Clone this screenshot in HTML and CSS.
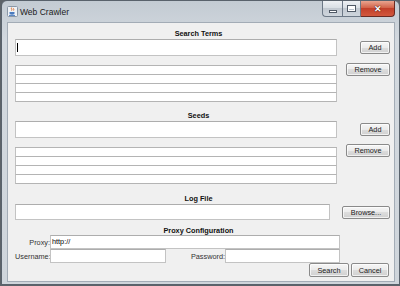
FILE: index.html
```html
<!DOCTYPE html>
<html lang="en">
  <head>
    <meta charset="UTF-8" />
    <title>Web Crawler</title>
    <link rel="stylesheet" href="styles.css">
  </head>
  <body>
    <div class="window">
      <div class="titlebar">
        <svg class="app-icon" width="11" height="11" viewBox="0 0 11 11">
          <rect x="0.5" y="0.5" width="10" height="10" rx="1" fill="#eef2f6" stroke="#8a97a6" />
          <path d="M4.6 1.6c-1 1 1 1.6 0 3M6.6 2.2c-.7.8.7 1 0 2.3" stroke="#e3702a" fill="none" />
          <path d="M2.5 6h5v1.3c0 1-1 1.4-2.5 1.4S2.5 8.3 2.5 7.3z" fill="#4a7bbf" />
          <path d="M2 9.4h6" stroke="#4a7bbf" />
        </svg>
        <span class="title">Web Crawler</span>
        <div class="caption">
          <span class="cap cap-min"><i></i></span>
          <span class="cap cap-max"><i></i></span>
          <span class="cap cap-close">&#x2715;</span>
        </div>
      </div>

      <div class="client">
        <div class="heading">Search Terms</div>
        <div class="row">
          <div class="field field-entry"><span class="caret"></span></div>
          <button class="btn btn-add">Add</button>
        </div>
        <div class="row row-list">
          <div class="list">
            <div class="list-item"></div>
            <div class="list-item"></div>
            <div class="list-item"></div>
            <div class="list-item"></div>
          </div>
          <button class="btn btn-remove">Remove</button>
        </div>

        <div class="heading heading-seeds">Seeds</div>
        <div class="row">
          <div class="field field-entry"></div>
          <button class="btn btn-add">Add</button>
        </div>
        <div class="row row-list row-list-seeds">
          <div class="list">
            <div class="list-item"></div>
            <div class="list-item"></div>
            <div class="list-item"></div>
            <div class="list-item"></div>
          </div>
          <button class="btn btn-remove">Remove</button>
        </div>

        <div class="heading heading-log">Log File</div>
        <div class="row">
          <div class="field field-log"></div>
          <button class="btn btn-browse">Browse...</button>
        </div>

        <div class="heading heading-proxy">Proxy Configuration</div>
        <div class="proxy">
          <label class="proxy-label">Proxy:</label>
          <div class="field field-small field-proxy"><span class="field-text">http://</span></div>
          <label class="proxy-label">Username:</label>
          <div class="field field-small"></div>
          <label class="proxy-label">Password:</label>
          <div class="field field-small"></div>
        </div>

        <div class="actions">
          <button class="btn btn-search">Search</button>
          <button class="btn btn-cancel">Cancel</button>
        </div>
      </div>
    </div>
  </body>
</html>
```

FILE: styles.css
```css
* {
  box-sizing: border-box;
}
body {
  margin: 0;
  height: 286px;
  overflow: hidden;
  background: #5d6369;
  font-family: 'Liberation Sans', Arial, sans-serif;
}
.window {
  margin-left: 1px;
  width: 399px;
  height: 285px;
  padding: 0 4px 2px 5px;
  border: 1px solid #59626c;
  border-radius: 6px 6px 0 0;
  background: linear-gradient(#c3cbd3, #d3d9df 40px, #cfd5db);
}
.titlebar {
  height: 21px;
  display: flex;
  align-items: center;
}
.app-icon {
  flex: none;
}
.title {
  margin-left: 2px;
  font-size: 8.5px;
  color: #1b1b1b;
}
.caption {
  margin-left: auto;
  align-self: flex-start;
  display: flex;
  height: 16px;
}
.cap {
  display: flex;
  align-items: center;
  justify-content: center;
  height: 16px;
  border: 1px solid #6c7886;
  border-top: 0;
  background: linear-gradient(#eef1f4, #d7dde3 50%, #c2c9d1 50%, #cfd6dd);
}
.cap-min {
  width: 20px;
  border-radius: 0 0 0 4px;
  border-right: 0;
}
.cap-min i {
  width: 8px;
  height: 3px;
  margin-top: 5px;
  background: #fff;
  border: 1px solid #505a66;
}
.cap-max {
  width: 19px;
}
.cap-max i {
  width: 9px;
  height: 7px;
  border: 1px solid #505a66;
  box-shadow: inset 0 0 0 1px #fff, inset 0 2px 0 1px #fff;
  background: #b9c2cc;
}
.cap-close {
  width: 34px;
  border-radius: 0 0 4px 0;
  border-left: 0;
  border-color: #6a2a22;
  background: linear-gradient(#e9a48f, #d2634a 45%, #c2402a 50%, #d2583e);
  color: #fff;
  font-size: 9px;
  font-weight: bold;
  text-shadow: 0 0 1px #3a0d07, 0 0 1px #3a0d07;
}
.client {
  height: 260px;
  padding: 6px 4px 0 7px;
  border: 1px solid #a3acb6;
  background: #f0f0f0;
  font-size: 7.3px;
  color: #222;
}
.heading {
  height: 10px;
  line-height: 10px;
  padding-right: 8px;
  text-align: center;
  font-weight: bold;
  color: #111;
}
.heading-seeds {
  margin-top: 9px;
}
.heading-log {
  margin-top: 10px;
}
.heading-proxy {
  margin-top: 6px;
  height: 9px;
  line-height: 9px;
}
.row {
  display: flex;
  align-items: center;
  justify-content: space-between;
}
.row-list {
  align-items: flex-start;
  margin-top: 7px;
}
.row-list .list {
  margin-top: 2px;
}
.row-list-seeds {
  margin-top: 6px;
}
.row-list-seeds .list {
  margin-top: 3px;
}
.field {
  background: #fff;
  border: 1px solid #c3c3c3;
  border-top-color: #adadad;
}
.field-entry {
  width: 322px;
  height: 17px;
  padding: 3px 1px;
}
.caret {
  display: block;
  width: 1px;
  height: 9px;
  background: #000;
}
.field-log {
  width: 315px;
  height: 16px;
}
.list {
  width: 322px;
  border-top: 1px solid #b4b4b4;
}
.list-item {
  height: 9px;
  background: #fff;
  border: 1px solid #c1c1c1;
  border-top: 0;
  border-bottom-color: #b4b4b4;
}
.btn {
  height: 13px;
  padding: 0;
  font-family: inherit;
  font-size: 7.3px;
  color: #222;
  border: 1px solid #8a8a8a;
  border-radius: 2px;
  background: linear-gradient(#f6f6f6, #ebebeb 50%, #dddddd 50%, #d0d0d0);
  box-shadow: inset 0 0 0 1px rgba(255, 255, 255, 0.7);
}
.btn-add {
  width: 30px;
}
.btn-remove {
  width: 44px;
}
.btn-browse {
  width: 48px;
}
.proxy {
  display: grid;
  grid-template-columns: 35px 116px 59px 115px;
  grid-template-rows: 14px 14px;
  align-items: stretch;
}
.proxy-label {
  align-self: center;
  text-align: right;
  color: #333;
}
.field-small {
  height: 14px;
  line-height: 12px;
  padding-left: 1px;
}
.field-text {
  color: #000;
}
.field-proxy {
  grid-column: 2 / 5;
}
.actions {
  display: flex;
  justify-content: flex-end;
  gap: 2px;
  padding-right: 1px;
}
.actions .btn {
  height: 14px;
}
.btn-search {
  width: 40px;
}
.btn-cancel {
  width: 38px;
}
```
